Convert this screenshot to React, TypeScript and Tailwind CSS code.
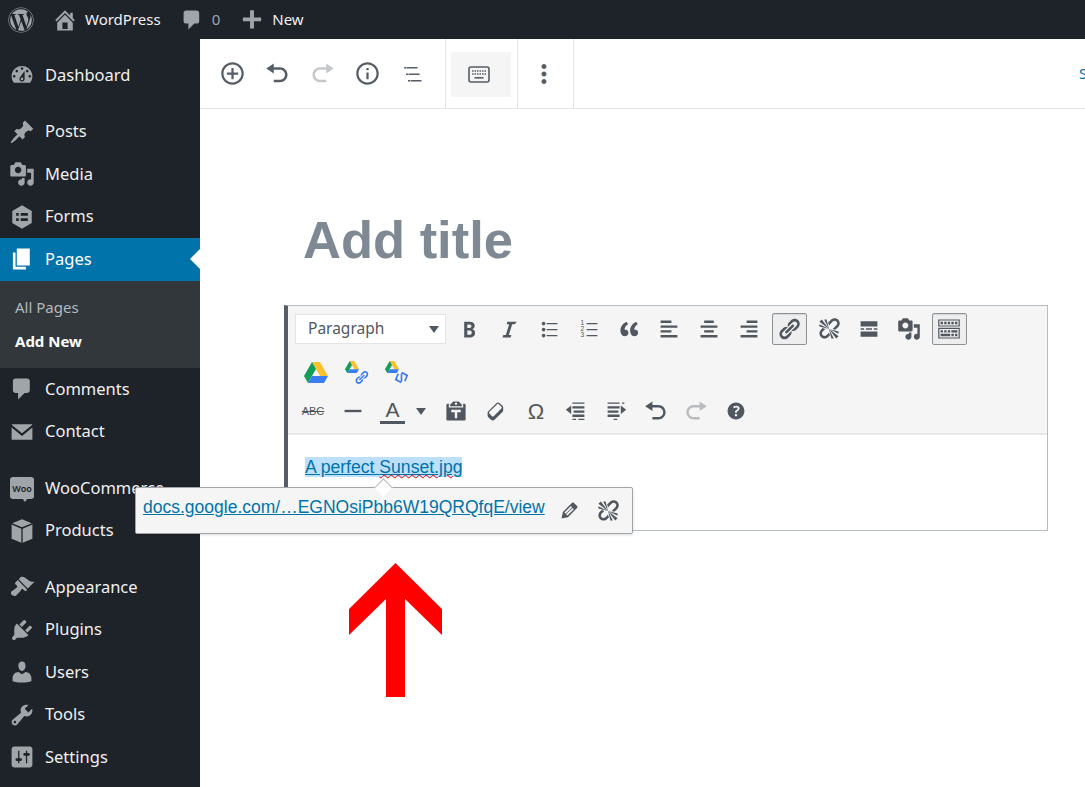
import { ReactNode } from "react";
import { FaWordpress } from "react-icons/fa";
import { MdAddCircleOutline, MdInfoOutline, MdMoreVert } from "react-icons/md";

// dashicons paths, 20x20 box
const p = {
  home: "M16 8.5l1.53 1.53-1.06 1.06L10 4.62l-6.47 6.47-1.06-1.06L10 2.5l4 4v-2h2v4zm-6-2.46l6 5.99V18H4v-5.97zM12 17v-5H8v5h4z",
  comment: "M5 2h9c1.1 0 2 .9 2 2v7c0 1.1-.9 2-2 2h-2l-5 5v-5H5c-1.1 0-2-.9-2-2V4c0-1.1.9-2 2-2z",
  plus: "M17 8v3h-5.5v5.5h-3V11H3V8h5.5V2.5h3V8z",
  dashboard: "M3.76 16h12.48c1.1-1.37 1.76-3.11 1.76-5 0-4.42-3.58-8-8-8s-8 3.58-8 8c0 1.89.66 3.63 1.76 5zM10 4c.55 0 1 .45 1 1s-.45 1-1 1-1-.45-1-1 .45-1 1-1zM6 6c.55 0 1 .45 1 1s-.45 1-1 1-1-.45-1-1 .45-1 1-1zm8 0c.55 0 1 .45 1 1s-.45 1-1 1-1-.45-1-1 .45-1 1-1zm-5.37 5.55L12 7v6c0 1.1-.9 2-2 2s-2-.9-2-2c0-.57.24-1.08.63-1.45zM4 10c.55 0 1 .45 1 1s-.45 1-1 1-1-.45-1-1 .45-1 1-1zm12 0c.55 0 1 .45 1 1s-.45 1-1 1-1-.45-1-1 .45-1 1-1zm-5 3c0-.55-.45-1-1-1s-1 .45-1 1 .45 1 1 1 1-.45 1-1z",
  post: "M10.44 3.02l1.82-1.82 6.36 6.35-1.83 1.82c-1.05-.68-2.48-.57-3.41.36l-.75.75c-.92.93-1.04 2.35-.35 3.41l-1.83 1.82-2.41-2.41-2.8 2.79c-.42.42-3.38 2.71-3.8 2.29s1.86-3.39 2.28-3.81l2.79-2.79L4.1 9.36l1.83-1.82c1.05.69 2.48.57 3.4-.36l.75-.75c.93-.92 1.05-2.35.36-3.41z",
  media: "M13 11V4c0-.55-.45-1-1-1h-1.67L9 1H5L3.67 3H2c-.55 0-1 .45-1 1v7c0 .55.45 1 1 1h10c.55 0 1-.45 1-1zM7 4.5c1.38 0 2.5 1.12 2.5 2.5S8.38 9.5 7 9.5 4.5 8.38 4.5 7 5.62 4.5 7 4.5zM14 6h5v10.5c0 1.38-1.12 2.5-2.5 2.5S14 17.88 14 16.5s1.12-2.5 2.5-2.5c.17 0 .34.02.5.05V9h-3V6zm-4 8.05V13h2v3.5c0 1.38-1.12 2.5-2.5 2.5S7 17.88 7 16.5 8.12 14 9.5 14c.17 0 .34.02.5.05z",
  forms: "M10 1l7.5 4.3v9.4L10 19l-7.5-4.3V5.3zM5.5 7v2h2V7zm3.5 0v2h5.5V7zm-3.5 4v2h2v-2zm3.5 0v2h5.5v-2z",
  page: "M6 15V2h10v13H6zm-1 1h8v2H3V5h2v11z",
  email: "M2.5 4h15c.3 0 .5.2.5.5L10 11 2 4.5c0-.3.2-.5.5-.5zM2 6.5l8 6.5 8-6.5v9c0 .3-.2.5-.5.5h-15c-.3 0-.5-.2-.5-.5z",
  box: "M10 1l7.5 3-7.5 3.2L2.5 4zM2 5l7.5 3.2V19L2 16zM18 5l-7.5 3.2V19L18 16z",
  brush: "M14.48 11.06L7.41 3.99l1.5-1.5c.5-.56 2.3-.47 3.51.32 1.21.8 1.43 1.28 2.91 2.1 1.18.64 2.45 1.26 4.45.85zm-.71.71L6.7 4.7 4.93 6.47c-.39.39-.39 1.02 0 1.41l1.06 1.06c.39.39.39 1.03 0 1.42-.6.6-1.43 1.11-2.21 1.69-.35.26-.7.53-1.01.84C1.43 13.23.99 14.84 2 16c1.5 1.5 3.07.68 3.37.67-.01.01.98-1 2.4-2.42.87-.87 1.28-1.79 1.76-2.36.39-.39 1.02-.39 1.41 0l1.06 1.06c.39.39 1.03.39 1.42 0z",
  plugin: "M13.11 4.36L9.87 7.6 8 5.73l3.24-3.24c.35-.34 1.05-.2 1.56.32.52.51.66 1.21.31 1.55zm-8 1.77l.91-1.12 9.01 9.01-1.19.84c-.71.71-2.63 1.16-3.82 1.16H6.14L4.9 17.26c-.59.59-1.54.59-2.12 0-.59-.58-.59-1.53 0-2.12l1.24-1.24v-3.88c0-1.13.4-3.19 1.09-3.89zm7.26 3.97l3.24-3.24c.34-.35 1.04-.21 1.55.31.52.51.66 1.21.31 1.55l-3.24 3.25z",
  users: "M10 9.25c-2.27 0-2.73-3.44-2.73-3.44C7 4.02 7.82 2 9.97 2c2.16 0 2.98 2.02 2.71 3.81 0 0-.41 3.44-2.68 3.44zm0 2.57L12.72 10c2.39 0 4.52 2.33 4.52 4.53v2.49s-3.65 1.13-7.24 1.13c-3.65 0-7.24-1.13-7.24-1.13v-2.49c0-2.25 1.94-4.48 4.47-4.48z",
  tools: "M16.68 9.77c-1.34 1.34-3.3 1.67-4.95.99l-5.41 6.52c-.99.99-2.59.99-3.58 0s-.99-2.59 0-3.57l6.52-5.42c-.68-1.65-.35-3.61.99-4.95 1.28-1.28 3.12-1.62 4.72-1.06l-2.89 2.89 2.82 2.82 2.86-2.87c.53 1.58.18 3.39-1.08 4.65zM3.81 16.21c.4.39 1.04.39 1.43 0 .4-.4.4-1.04 0-1.43-.39-.4-1.03-.4-1.43 0-.39.39-.39 1.03 0 1.43z",
  settings: "M18 16V4c0-1.1-.9-2-2-2H4c-1.1 0-2 .9-2 2v12c0 1.1.9 2 2 2h12c1.1 0 2-.9 2-2zM8 11h1c.55 0 1 .45 1 1s-.45 1-1 1H8v1.5c0 .28-.22.5-.5.5s-.5-.22-.5-.5V13H6c-.55 0-1-.45-1-1s.45-1 1-1h1V5.5c0-.28.22-.5.5-.5s.5.22.5.5V11zm5-2h-1c-.55 0-1-.45-1-1s.45-1 1-1h1V5.5c0-.28.22-.5.5-.5s.5.22.5.5V7h1c.55 0 1 .45 1 1s-.45 1-1 1h-1v5.5c0 .28-.22.5-.5.5s-.5-.22-.5-.5V9z",
  undo: "M12 5H7V2L1 6l6 4V7h5c2.2 0 4 1.8 4 4s-1.8 4-4 4H7v2h5c3.3 0 6-2.7 6-6s-2.7-6-6-6z",
  redo: "M8 5h5V2l6 4-6 4V7H8c-2.2 0-4 1.8-4 4s1.8 4 4 4h5v2H8c-3.3 0-6-2.7-6-6s2.7-6 6-6z",
  bold: "M6 4v13h4.54c1.37 0 2.46-.33 3.26-1 .8-.66 1.2-1.58 1.2-2.77 0-.84-.17-1.51-.51-2.01s-.9-.85-1.67-1.03v-.09c.57-.1 1.02-.4 1.36-.9s.51-1.13.51-1.91c0-1.14-.39-1.98-1.17-2.5C12.75 4.26 11.5 4 9.78 4H6zm2.57 5.15V6.26h1.36c.73 0 1.27.11 1.61.32.34.22.51.58.51 1.07 0 .54-.16.92-.47 1.15s-.82.35-1.51.35h-1.5zm0 2.19h1.6c1.44 0 2.16.53 2.16 1.61 0 .6-.17 1.05-.51 1.34s-.86.43-1.57.43H8.57v-3.38z",
  italic: "M14.78 6h-2.13l-2.8 9h2.12l-.62 2H4.6l.62-2h2.14l2.8-9H8.03l.62-2h7.75z",
  ul: "M5.5 7C4.67 7 4 6.33 4 5.5 4 4.68 4.67 4 5.5 4 6.32 4 7 4.68 7 5.5 7 6.33 6.32 7 5.5 7zM8 5h9v1H8V5zm-2.5 7c-.83 0-1.5-.67-1.5-1.5C4 9.68 4.67 9 5.5 9c.82 0 1.5.68 1.5 1.5 0 .83-.68 1.5-1.5 1.5zM8 10h9v1H8v-1zm-2.5 7c-.83 0-1.5-.67-1.5-1.5 0-.82.67-1.5 1.5-1.5.82 0 1.5.68 1.5 1.5 0 .83-.68 1.5-1.5 1.5zM8 15h9v1H8v-1z",
  quote: "M9.49 13.22c0-.74-.2-1.38-.61-1.9-.62-.78-1.83-.88-2.53-.72-.29-1.65 1.11-3.75 2.92-4.65L7.88 4c-2.73 1.3-5.42 4.28-4.96 8.05C3.21 14.43 4.59 16 6.54 16c.85 0 1.56-.25 2.12-.75s.83-1.18.83-2.03zm8.05 0c0-.74-.2-1.38-.61-1.9-.63-.78-1.83-.88-2.53-.72-.29-1.65 1.11-3.75 2.92-4.65L15.93 4c-2.73 1.3-5.41 4.28-4.95 8.05.29 2.38 1.66 3.95 3.61 3.95.85 0 1.56-.25 2.12-.75s.83-1.18.83-2.03z",
  left: "M12 5V3H3v2h9zm5 4V7H3v2h14zm-5 4v-2H3v2h9zm5 4v-2H3v2h14z",
  center: "M14 5V3H6v2h8zm3 4V7H3v2h14zm-3 4v-2H6v2h8zm3 4v-2H3v2h14z",
  right: "M17 5V3H8v2h9zm0 4V7H3v2h14zm0 4v-2H8v2h9zm0 4v-2H3v2h14z",
  link: "M17.74 2.76c1.68 1.69 1.68 4.41 0 6.1l-1.53 1.52c-1.12 1.12-2.7 1.47-4.14 1.09l2.62-2.61.76-.77.76-.76c.84-.84.84-2.2 0-3.04-.84-.85-2.2-.85-3.04 0l-.77.76-3.38 3.38c-.37-1.44-.02-3.02 1.1-4.14l1.52-1.53c1.69-1.69 4.42-1.69 6.1 0zM8.59 13.43l5.34-5.34c.42-.42.42-1.1 0-1.52-.44-.43-1.13-.39-1.53 0l-5.33 5.34c-.42.42-.42 1.1 0 1.52.44.43 1.13.39 1.52 0zm-.76 2.29l4.14-4.15c.38 1.44.03 3.02-1.09 4.14l-1.52 1.53c-1.69 1.68-4.41 1.68-6.1 0-1.68-1.68-1.68-4.42 0-6.1l1.53-1.52c1.12-1.12 2.7-1.47 4.14-1.1l-4.14 4.15c-.85.84-.85 2.2 0 3.05.84.84 2.2.84 3.04 0z",
  unlink: "M17.74 2.26c1.68 1.69 1.68 4.41 0 6.1l-1.53 1.52c-.32.33-.69.58-1.08.77L13 10l1.69-1.64.76-.77.76-.76c.84-.84.84-2.2 0-3.04-.84-.85-2.2-.85-3.04 0l-.77.76-.76.76L10 7l-.65-2.14c.19-.38.44-.75.77-1.07l1.52-1.53c1.69-1.68 4.42-1.68 6.1 0zM2 4l8 6-6-8zm4-2l4 8-2-8H6zM2 6l8 4-8-2V6zm7.36 7.69L10 13l.74 2.35-1.38 1.39c-1.69 1.68-4.41 1.68-6.1 0-1.68-1.68-1.68-4.42 0-6.1l1.39-1.38L7 10l-.69.64-1.52 1.53c-.85.84-.85 2.2 0 3.04.84.85 2.2.85 3.04 0zM18 16l-8-6 6 8zm-4 2l-4-8 2 8h2zm4-4l-8-4 8 2v2z",
  more: "M3 3.5h14V8H3zM3 12h14v4.5H3zM3 9.3h3v1.4H3zM7.5 9.3h5v1.4h-5zM14 9.3h3v1.4h-3z",
  sink: "M19 2v6H1V2h18zm-1 5V3H2v4h16zM5 4v2H3V4h2zm3 0v2H6V4h2zm3 0v2H9V4h2zm3 0v2h-2V4h2zm3 0v2h-2V4h2zm2 5v9H1V9h18zm-1 8v-7H2v7h16zM5 11v2H3v-2h2zm3 0v2H6v-2h2zm3 0v2H9v-2h2zm6 0v2h-5v-2h5zm-6 3v2H3v-2h8zm3 0v2h-2v-2h2zm3 0v2h-2v-2h2z",
  hr: "M3 9h14v2H3z",
  paste: "M12.38 2L15 5v1H5V5l2.64-3h4.74zM10 5c.55 0 1-.44 1-1 0-.55-.45-1-1-1-.56 0-1 .45-1 1 0 .56.44 1 1 1zm5.45-1H17c.55 0 1 .45 1 1v12c0 .55-.45 1-1 1H3c-.55 0-1-.45-1-1V5c0-.55.45-1 1-1h1.55L4 4.63V7h12V4.63zM14 11V9H6v2h3v5h2v-5h3z",
  eraser: "M14.29 4.59l1.1 1.11c.41.4.61.94.61 1.47v2.12c0 .53-.2 1.07-.61 1.47l-6.63 6.63c-.4.41-.94.61-1.47.61s-1.07-.2-1.47-.61l-1.11-1.1-1.1-1.11c-.41-.4-.61-.94-.61-1.47v-2.12c0-.54.2-1.07.61-1.48l6.63-6.62c.4-.41.94-.61 1.47-.61s1.07.2 1.47.61zm-6.21 9.7l6.42-6.42c.39-.39.39-1.03 0-1.43L12.36 4.3c-.19-.19-.45-.29-.7-.29-.26 0-.52.1-.71.29l-6.42 6.42c-.39.4-.39 1.04 0 1.43l2.14 2.14c.38.38 1.03.39 1.41 0z",
  outdent: "M7 3h10v1H7zM7 6h10v2H7zM8 9.5h9v2H8zM7 13h10v2H7zM7 16.5h3v1H7zM12 16.5h5v1h-5zM1.5 9L6 5.5v7z",
  indent: "M3 3h10v1H3zM3 6h10v2H3zM3 9.5h9v2H3zM3 13h10v2H3zM8 16.5h3v1H8zM15 3h2v1h-2zM18.5 9L14 5.500v7z",
  help: "M17 10c0-3.87-3.14-7-7-7-3.87 0-7 3.13-7 7s3.13 7 7 7c3.86 0 7-3.13 7-7zm-6.3 1.48H9.14v-.43c0-.38.08-.7.24-.98s.46-.57.88-.89c.41-.29.68-.53.81-.71.14-.18.2-.39.2-.62 0-.25-.09-.44-.28-.58-.19-.13-.45-.19-.79-.19-.58 0-1.25.19-2 .57l-.64-1.28c.87-.49 1.8-.74 2.77-.74.81 0 1.45.2 1.92.58.48.39.71.91.71 1.55 0 .43-.09.8-.29 1.11-.19.32-.57.67-1.11 1.06-.38.28-.61.49-.71.63-.1.15-.15.34-.15.57v.35zm-1.47 2.74c-.18-.17-.27-.42-.27-.73 0-.33.08-.58.26-.75s.43-.25.77-.25c.32 0 .57.09.75.26s.27.42.27.74c0 .3-.09.55-.27.72-.18.18-.43.27-.75.27-.33 0-.58-.09-.76-.26z",
  pencil: "M13.89 3.39l2.71 2.72c.46.46.42 1.24.03 1.64l-8.01 8.02-5.56 1.16 1.16-5.58s7.6-7.63 7.99-8.03c.39-.39 1.22-.39 1.68.07zm-2.73 2.79l-5.59 5.61 1.11 1.11 5.54-5.65zm-2.97 8.23l5.58-5.6-1.07-1.08-5.59 5.6z",
};

function Dash({ d, size = 26, className = "" }: { d: string; size?: number; className?: string }) {
  return (
    <svg viewBox="0 0 20 20" width={size} height={size} fill="currentColor" fillRule="evenodd" className={className}>
      <path d={d} />
    </svg>
  );
}

function NestedList() {
  return (
    <svg viewBox="0 0 24 24" width={24} height={24} fill="currentColor" className="ml-[2px]">
      <path d="M2 5h2v1.500H2zM4.500 5h11v1.500h-11zM4 11.500h2V13H4zM6.500 11.500h11V13h-11zM6 18h2v1.500H6zM8.500 18h11v1.500h-11z" />
    </svg>
  );
}

function KeyboardIcon() {
  return (
    <svg viewBox="0 0 22 17" width={22} height={17} fill="none" className="mr-[5px]">
      <rect x="1" y="1" width="20" height="15" rx="2" stroke="currentColor" strokeWidth="1.6" />
      <path d="M4 5h14M4 8h14" stroke="currentColor" strokeWidth="1.5" strokeDasharray="1.5 1" />
      <path d="M6.5 11.800h9" stroke="currentColor" strokeWidth="1.6" />
    </svg>
  );
}

function WooIcon() {
  return (
    <div className="relative w-[24px] h-[22px] ml-px mr-px bg-[#a0a5aa] rounded-[3px] flex items-center justify-center">
      <span className="text-[9px] font-semibold text-[#1e2229] leading-none font-['Noto_Sans',sans-serif]">Woo</span>
      <div className="absolute -bottom-[3px] left-[12px] w-0 h-0 border-l-[3px] border-r-[3px] border-t-[4px] border-l-transparent border-r-transparent border-t-[#a0a5aa]" />
    </div>
  );
}

function NavItem({ icon, label, className = "" }: { icon: ReactNode; label: string; className?: string }) {
  return (
    <div className={`h-[42.5px] flex items-center pl-[9px] gap-[10px] text-[#f0f0f1] ${className}`}>
      <span className="w-[26px] flex justify-center text-[#a0a5aa]">{icon}</span>
      <span className="text-[16.5px] whitespace-nowrap">{label}</span>
    </div>
  );
}

function Sidebar() {
  return (
    <aside className="w-[200px] shrink-0 bg-[#1e2229] pt-[15px] h-[748px]">
      <NavItem icon={<Dash d={p.dashboard} />} label="Dashboard" className="mb-[14px]" />
      <NavItem icon={<Dash d={p.post} />} label="Posts" />
      <NavItem icon={<Dash d={p.media} />} label="Media" />
      <NavItem icon={<Dash d={p.forms} />} label="Forms" />
      <div className="relative h-[42.5px] flex items-center pl-[9px] gap-[10px] bg-[#0073aa] text-white">
        <Dash d={p.page} />
        <span className="text-[16.5px]">Pages</span>
        <div className="absolute right-0 top-[11px] w-0 h-0 border-y-[10px] border-r-[10px] border-y-transparent border-r-white" />
      </div>
      <div className="bg-[#32373c] h-[87.5px] pl-[15px] pt-[13px] text-[15px]">
        <div className="text-[#b4b9be] h-[34px] leading-[26px]">All Pages</div>
        <div className="text-white font-bold leading-[26px]">Add New</div>
      </div>
      <NavItem icon={<Dash d={p.comment} />} label="Comments" />
      <NavItem icon={<Dash d={p.email} />} label="Contact" className="mb-[14px]" />
      <NavItem icon={<WooIcon />} label="WooCommerce" />
      <NavItem icon={<Dash d={p.box} />} label="Products" className="mb-[14px]" />
      <NavItem icon={<Dash d={p.brush} />} label="Appearance" />
      <NavItem icon={<Dash d={p.plugin} />} label="Plugins" />
      <NavItem icon={<Dash d={p.users} />} label="Users" />
      <NavItem icon={<Dash d={p.tools} />} label="Tools" />
      <NavItem icon={<Dash d={p.settings} />} label="Settings" />
    </aside>
  );
}

function TopBar() {
  return (
    <header className="h-[39px] bg-[#1e2229] flex items-center text-[15px] text-[#f0f0f1]">
      <FaWordpress size={26} className="ml-[8px] text-[#a0a5aa]" />
      <Dash d={p.home} className="ml-[18px] text-[#a0a5aa]" />
      <span className="ml-[7px]">WordPress</span>
      <Dash d={p.comment} className="ml-[19px] text-[#a0a5aa]" size={24} />
      <span className="ml-[8px] text-[#a0a5aa]">0</span>
      <Dash d={p.plus} className="ml-[19px] text-[#a0a5aa]" />
      <span className="ml-[7px]">New</span>
    </header>
  );
}

function TopTool({ children }: { children: ReactNode }) {
  return <div className="w-[45px] flex justify-center">{children}</div>;
}

function EditorBar() {
  return (
    <div className="h-[70px] shrink-0 flex items-stretch border-b border-[#e2e4e7] text-[#555d66] overflow-hidden">
      <div className="w-[246px] pl-[10px] flex items-center border-r border-[#e2e4e7] shrink-0">
        <TopTool><MdAddCircleOutline size={27} /></TopTool>
        <TopTool><Dash d={p.undo} size={25} /></TopTool>
        <TopTool><Dash d={p.redo} size={25} className="text-[#c5c8cb]" /></TopTool>
        <TopTool><MdInfoOutline size={27} /></TopTool>
        <TopTool><NestedList /></TopTool>
      </div>
      <div className="w-[72px] flex items-center pl-[5px] border-r border-[#e2e4e7] shrink-0">
        <div className="w-[60px] h-[45px] mt-px bg-[#f5f5f5] flex items-center justify-center"><KeyboardIcon /></div>
      </div>
      <div className="w-[56px] flex items-center justify-center pr-[3px] border-r border-[#e2e4e7] shrink-0"><MdMoreVert size={30} /></div>
      <div className="ml-[505px] flex items-center text-[#0073aa] text-[15px] whitespace-nowrap">Save</div>
    </div>
  );
}

function Btn({ d, size = 24, active = false, faded = false }: { d: string; size?: number; active?: boolean; faded?: boolean }) {
  return (
    <div className="w-[40px] h-[32px] shrink-0 flex items-center justify-center">
      <div className={`w-[35px] h-[32px] flex items-center justify-center rounded-[2px] border ${active ? "border-[#8d9297] bg-[#eeeeee] shadow-[inset_0_1px_1px_rgba(0,0,0,0.1)]" : "border-transparent"} ${faded ? "text-[#b9bcbf]" : "text-[#50575e]"}`}>
        <Dash d={d} size={size} />
      </div>
    </div>
  );
}

function DriveLogo({ w = 24 }: { w?: number }) {
  return (
    <svg viewBox="0 0 24 21" width={w} height={(w * 21) / 24}>
      <path d="M8 0h8l8 14h-8z" fill="#fbc02d" />
      <path d="M8 0l4 7-8 14-4-7z" fill="#0f9d58" />
      <path d="M8 14h16l-4 7H4z" fill="#3b7cf0" />
    </svg>
  );
}

function ClassicToolbar() {
  return (
    <div className="bg-[#f5f5f5] h-[129px] pt-[7px] pl-[7px] border-b-[2px] border-[#e6e6e6]">
      <div className="flex items-center h-[32px]">
        <div className="w-[151px] h-[30px] bg-white border border-[#e2e4e7] flex items-center justify-between pl-[12px] pr-[6px] text-[15.5px] text-[#50575e] shrink-0">
          Paragraph
          <span className="w-0 h-0 border-x-[5px] border-t-[7px] border-x-transparent border-t-[#50575e]" />
        </div>
        <div className="w-[3px]" />
        <Btn d={p.bold} />
        <Btn d={p.italic} />
        <Btn d={p.ul} />
        <div className="w-[40px] flex justify-center shrink-0 text-[#50575e]">
          <svg viewBox="0 0 20 20" width={24} height={24} fill="currentColor">
            <text x="3" y="7" fontSize="5.5" fontFamily="Liberation Sans">1</text>
            <text x="3" y="12" fontSize="5.5" fontFamily="Liberation Sans">2</text>
            <text x="3" y="17" fontSize="5.5" fontFamily="Liberation Sans">3</text>
            <path d="M8 5h9v1H8zM8 10h9v1H8zM8 15h9v1H8z" />
          </svg>
        </div>
        <Btn d={p.quote} />
        <Btn d={p.left} />
        <Btn d={p.center} />
        <Btn d={p.right} />
        <Btn d={p.link} active />
        <Btn d={p.unlink} />
        <Btn d={p.more} />
        <Btn d={p.media} />
        <Btn d={p.sink} active />
      </div>
      <div className="flex items-center h-[30px] mt-[12px] -ml-px">
        <div className="w-[43px] flex justify-center"><DriveLogo /></div>
        <div className="w-[40px] flex justify-center">
          <div className="relative w-[24px] h-[22px]">
            <DriveLogo w={14} />
            <svg viewBox="0 0 20 20" width={15} height={15} className="absolute left-[9px] top-[9px] text-[#3b7cf0]" fill="currentColor"><path d={p.link} /></svg>
          </div>
        </div>
        <div className="w-[40px] flex justify-center">
          <div className="relative w-[24px] h-[22px]">
            <DriveLogo w={14} />
            <svg viewBox="0 0 16 16" width={15} height={15} className="absolute left-[9px] top-[9px] -rotate-[20deg]" fill="none" stroke="#3b7cf0" strokeWidth="1.8">
              <path d="M6 3L1.500 8 6 13M10 3l4.500 5L10 13M9.500 4L6.500 12" />
            </svg>
          </div>
        </div>
      </div>
      <div className="flex items-center h-[32px] mt-[8px] -ml-[2px]">
        <div className="w-[40px] flex justify-center text-[11px] text-[#50575e] line-through font-['Liberation_Sans',sans-serif]">ABC</div>
        <Btn d={p.hr} />
        <div className="w-[63px] shrink-0 relative flex items-center text-[#50575e]">
          <span className="ml-[7px] w-[25px] text-center border-b-[3px] border-[#50575e] text-[21px] leading-[22px] font-['Liberation_Sans',sans-serif]">A</span>
          <span className="ml-[11px] w-0 h-0 border-x-[5px] border-t-[7px] border-x-transparent border-t-[#50575e]" />
        </div>
        <Btn d={p.paste} />
        <Btn d={p.eraser} />
        <div className="w-[40px] text-center text-[22px] font-medium text-[#50575e] font-['Liberation_Sans',sans-serif]">Ω</div>
        <Btn d={p.outdent} />
        <Btn d={p.indent} />
        <Btn d={p.undo} />
        <Btn d={p.redo} faded />
        <Btn d={p.help} />
      </div>
    </div>
  );
}

function LinkPopup() {
  return (
    <div className="absolute left-[135px] top-[487px] w-[498px] h-[47px] bg-[#f5f5f5] border border-[#a0a5aa] rounded-[2px] shadow-[0_1px_3px_rgba(0,0,0,0.15)] flex items-center pl-[7px] font-['Liberation_Sans',sans-serif]">
      <div className="absolute -top-[7px] left-[241px] w-[13px] h-[13px] rotate-45 bg-white border-l border-t border-[#b5b9bd]" />
      <span className="relative -mt-[6px] text-[17.5px] text-[#0073aa] underline whitespace-nowrap">docs.google.com/…EGNOsiPbb6W19QRQfqE/view</span>
      <Dash d={p.pencil} size={23} className="ml-[13px] text-[#50575e]" />
      <Dash d={p.unlink} size={24} className="ml-[15px] text-[#50575e]" />
    </div>
  );
}

export default function App() {
  return (
    <div className="relative w-[1085px] h-[787px] overflow-hidden bg-white font-['Noto_Sans',sans-serif]">
      <TopBar />
      <div className="flex">
        <Sidebar />
        <main className="flex-1 flex flex-col min-w-0">
          <EditorBar />
          <h1 className="ml-[103px] mt-[98px] h-[66px] text-[52.5px] leading-[66px] font-bold text-[#7e8993] font-['Liberation_Sans',sans-serif]">Add title</h1>
          <section className="ml-[84px] mt-[32px] w-[764px] h-[226px] border border-[#b5bcc2] border-l-[4px] border-l-[#555d66]">
            <ClassicToolbar />
            <div className="pl-[17px] pt-[19px] text-[17.6px] font-['Liberation_Sans',sans-serif]">
              <span className="bg-[#bce0fa] text-[#0073aa] underline leading-[20px] inline-block">
                A perfect <span className="underline decoration-wavy decoration-[#e00] decoration-1">Sunset.jpg</span>
              </span>
            </div>
          </section>
        </main>
      </div>
      <LinkPopup />
      <svg className="absolute left-[349px] top-[563px]" width={94} height={134} viewBox="0 0 94 134">
        <path d="M46.500 0L93 46v26L56 36v98H37V36L0 72V46z" fill="#ff0000" />
      </svg>
    </div>
  );
}
